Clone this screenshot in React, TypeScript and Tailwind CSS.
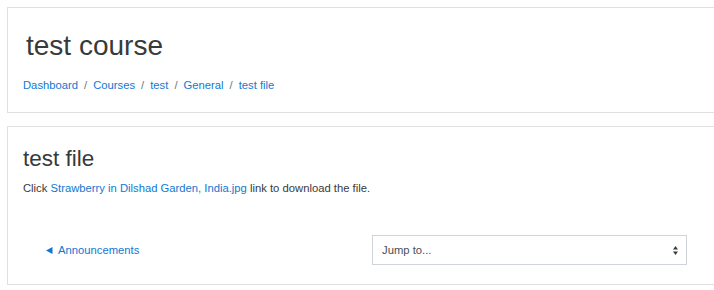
import React from "react";

const crumbs = ["Dashboard", "Courses", "test", "General", "test file"];

function Breadcrumb() {
  return (
    <ol className="flex items-center text-[11.25px] leading-[17px]">
      {crumbs.map((c, i) => (
        <li key={c} className="flex items-center">
          {i > 0 && <span className="px-[6px] text-[#6c757d]">/</span>}
          <a href="#" className="text-[#1177d1]">{c}</a>
        </li>
      ))}
    </ol>
  );
}

function PrevIcon() {
  return (
    <svg width="7" height="7" viewBox="0 0 7 7" className="mr-[5px]">
      <polygon points="0,3.5 6.5,0 6.5,7" fill="#1177d1" />
    </svg>
  );
}

function SelectArrows() {
  return (
    <svg width="5" height="9" viewBox="0 0 5 9">
      <polygon points="2.5,0 5,3.5 0,3.5" fill="#343a40" />
      <polygon points="0,5.5 5,5.5 2.5,9" fill="#343a40" />
    </svg>
  );
}

export default function App() {
  return (
    <div className="w-full overflow-hidden bg-white font-['Liberation_Sans',Arial,sans-serif] text-[#373a3c]">
      <div className="pl-[7px] pt-[7px] pb-[5px]">
        {/* Page header */}
        <div className="w-[730px] border border-[#e0e0e0] bg-white px-[15px] pt-[15px] pb-[18px]">
          <h1 className="mt-[6px] pl-[3px] text-[28px] leading-[34px] font-normal">test course</h1>
          <div className="mt-[14px]">
            <Breadcrumb />
          </div>
        </div>

        {/* Main content */}
        <div className="mt-[13px] w-[730px] border border-[#e0e0e0] bg-white px-[15px] pt-[15px] pb-[19px]">
          <h2 className="mt-[3px] text-[22.5px] leading-[27px] font-normal">test file</h2>
          <p className="mt-[8px] text-[11.25px] leading-[17px]">
            Click <a href="#" className="text-[#1177d1]">Strawberry in Dilshad Garden, India.jpg</a> link to download the file.
          </p>

          <div className="mt-[38px] flex items-center">
            <div className="w-[349px] pl-[23px]">
              <a href="#" className="flex items-center text-[11.25px] leading-[17px] text-[#1177d1]">
                <PrevIcon />
                Announcements
              </a>
            </div>
            <div className="flex h-[30px] w-[315px] items-center justify-between border border-[#ced4da] bg-white pl-[9px] pr-[8px] text-[11.25px] text-[#495057]">
              <span>Jump to...</span>
              <SelectArrows />
            </div>
          </div>
        </div>
      </div>
    </div>
  );
}
